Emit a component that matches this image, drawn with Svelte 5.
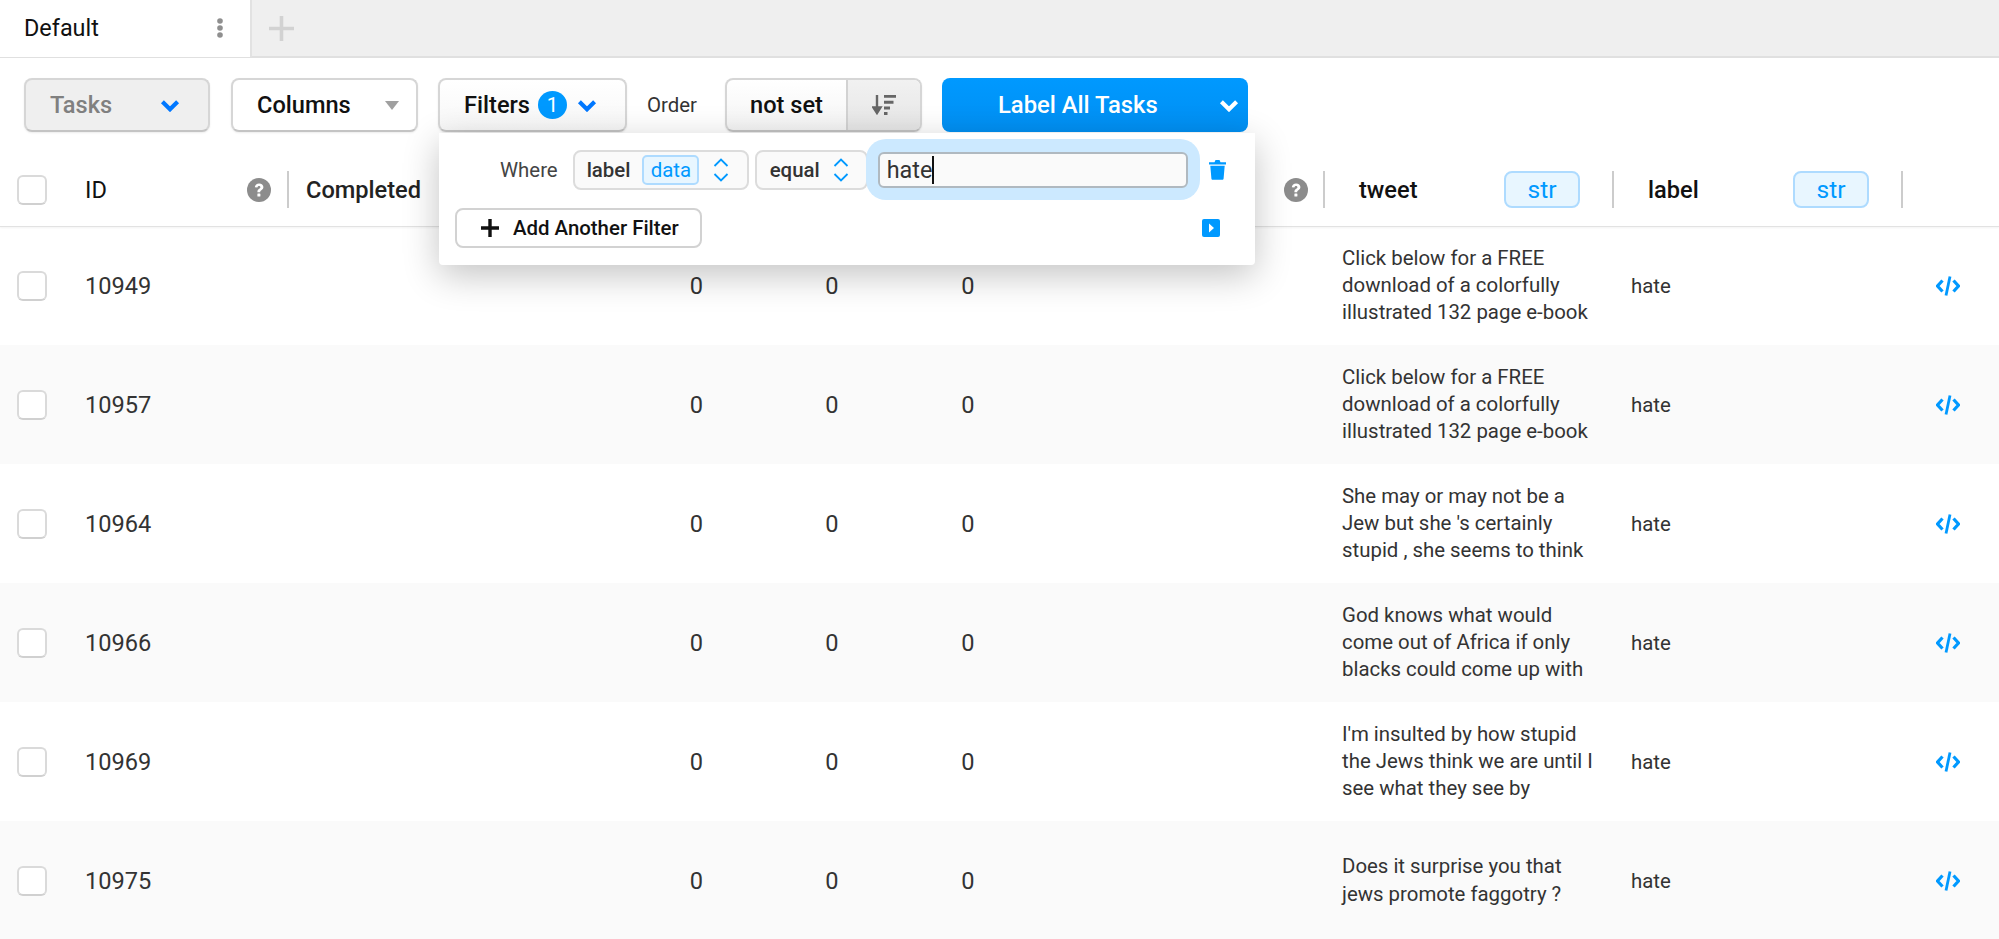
<script lang="ts">
	const rows = [
		{ id: 10949, tweet: ['Click below for a FREE', 'download of a colorfully', 'illustrated 132 page e-book'] },
		{ id: 10957, tweet: ['Click below for a FREE', 'download of a colorfully', 'illustrated 132 page e-book'] },
		{ id: 10964, tweet: ['She may or may not be a', "Jew but she 's certainly", 'stupid , she seems to think'] },
		{ id: 10966, tweet: ['God knows what would', 'come out of Africa if only', 'blacks could come up with'] },
		{ id: 10969, tweet: ["I'm insulted by how stupid", 'the Jews think we are until I', 'see what they see by'] },
		{ id: 10975, tweet: ['Does it surprise you that', 'jews promote faggotry ?'] }
	];
</script>

{#snippet chevron(cls: string)}
	<svg class={cls} viewBox="0 0 18 12" aria-hidden="true"><path d="M2 2.500 9 9.500l7-7" fill="none" stroke="currentColor" stroke-width="3.800" /></svg>
{/snippet}

{#snippet updown()}
	<svg class="updown" viewBox="0 0 18 26" aria-hidden="true"><path d="M2.500 9 9 2.500 15.500 9M2.500 17 9 23.500 15.500 17" fill="none" stroke="currentColor" stroke-width="1.800" /></svg>
{/snippet}

{#snippet help()}
	<svg class="help" viewBox="0 0 24 24" aria-hidden="true">
		<circle cx="12" cy="12" r="12" fill="#8c8c8c" />
		<path d="M7.800 9.300c.2-2.500 2-3.900 4.300-3.900 2.500 0 4.300 1.500 4.300 3.600 0 1.600-.8 2.400-2 3.200-.9.600-1.200 1-1.200 2H10.400c0-1.700.5-2.600 1.700-3.400.9-.6 1.300-1 1.300-1.600 0-.8-.6-1.300-1.400-1.300-.9 0-1.500.6-1.600 1.600z" fill="#fff" />
		<rect x="10.400" y="15.500" width="3" height="3" rx=".5" fill="#fff" />
	</svg>
{/snippet}

<div class="page">
	<div class="tabs">
		<div class="tab">
			<span>Default</span>
			<svg class="dots" viewBox="0 0 8 20" aria-hidden="true">
				<circle cx="4" cy="3" r="2.800" />
				<circle cx="4" cy="10" r="2.800" />
				<circle cx="4" cy="17" r="2.800" />
			</svg>
		</div>
		<svg class="add-tab" viewBox="0 0 25 25" aria-hidden="true"><path d="M12.500 0v25M0 12.500h25" stroke="currentColor" stroke-width="3.600" /></svg>
	</div>

	<div class="toolbar">
		<button class="btn tasks">
			<span>Tasks</span>
			{@render chevron('chev')}
		</button>
		<button class="btn columns">
			<span>Columns</span>
			<span class="caret"></span>
		</button>
		<button class="btn filters">
			<span>Filters</span>
			<span class="badge">1</span>
			{@render chevron('chev')}
		</button>
		<span class="order-label">Order</span>
		<div class="btn order">
			<span class="order-value">not set</span>
			<span class="order-dir">
				<svg viewBox="0 0 24 20" aria-hidden="true">
					<path d="M5 0v15M1.500 12.500 5 18l3.500-5.500z" fill="#666" stroke="#666" stroke-width="2.400" />
					<path d="M12 1.300h12M12 7.300h9.500M12 13h6M12 18.500h3.500" stroke="#666" stroke-width="3" />
				</svg>
			</span>
		</div>
		<div class="label-all">
			<span>Label All Tasks</span>
			{@render chevron('chev-white')}
		</div>
	</div>

	<div class="table">
		<div class="row head">
			<div class="cell"><span class="check"></span></div>
			<div class="cell id-head divided">
				<span>ID</span>
				{@render help()}
			</div>
			<div class="cell completed">Completed</div>
			<div class="cell"></div>
			<div class="cell"></div>
			<div class="cell"></div>
			<div class="cell help-cell divided">{@render help()}</div>
			<div class="cell col-head divided">
				<span>tweet</span>
				<span class="type">str</span>
			</div>
			<div class="cell col-head divided">
				<span>label</span>
				<span class="type">str</span>
			</div>
			<div class="cell"></div>
		</div>

		{#each rows as row}
			<div class="row body">
				<div class="cell"><span class="check"></span></div>
				<div class="cell id">{row.id}</div>
				<div class="cell"></div>
				<div class="cell num">0</div>
				<div class="cell num">0</div>
				<div class="cell num">0</div>
				<div class="cell"></div>
				<div class="cell tweet">
					{#each row.tweet as line}
						<div>{line}</div>
					{/each}
				</div>
				<div class="cell label">hate</div>
				<div class="cell code">
					<svg viewBox="0 0 24 20" aria-hidden="true">
						<path d="M6.500 4.500 1.500 10l5 5.500M17.500 4.500l5 5.500-5 5.500" fill="none" stroke="currentColor" stroke-width="3.200" />
						<path d="M14 .5 10 19.500" fill="none" stroke="currentColor" stroke-width="2.800" />
					</svg>
				</div>
			</div>
		{/each}
	</div>

	<div class="popup">
		<div class="filter-line">
			<span class="where">Where</span>
			<div class="select column-select">
				<span>label</span>
				<span class="type small">data</span>
				{@render updown()}
			</div>
			<div class="select op-select">
				<span>equal</span>
				{@render updown()}
			</div>
			<div class="focus-ring">
				<div class="input">hate<i class="caret-line"></i></div>
			</div>
			<svg class="trash" viewBox="0 0 19 21" aria-hidden="true">
				<path d="M1 3.200h17v2.400H1zM6.500 3.200 7.500 1h4l1 2.200z" fill="currentColor" />
				<path d="M2.300 6.800h14.400l-1.100 12.700c0 .8-.6 1.300-1.300 1.300H4.700c-.7 0-1.300-.5-1.300-1.300z" fill="currentColor" />
			</svg>
		</div>
		<div class="filter-actions">
			<div class="add-filter">
				<svg viewBox="0 0 18 18" aria-hidden="true"><path d="M9 0v18M0 9h18" stroke="currentColor" stroke-width="3.400" /></svg>
				<span>Add Another Filter</span>
			</div>
			<svg class="apply" viewBox="0 0 18 18" aria-hidden="true">
				<rect width="18" height="18" rx="2" fill="currentColor" />
				<path d="M7 4.500 12 9l-5 4.500z" fill="#fff" />
			</svg>
		</div>
	</div>
</div>

<style>
	:global(body) {
		background: #fff;
		font-family: Roboto, sans-serif;
		overflow: hidden;
	}

	.page {
		position: relative;
		height: 939px;
		overflow: hidden;
		color: #333;
	}

	.tabs {
		display: flex;
		align-items: center;
		height: 58px;
		box-sizing: border-box;
		background: #efefef;
		border-bottom: 2px solid #e0e0e0;
	}

	.tab {
		display: flex;
		align-items: center;
		justify-content: space-between;
		box-sizing: border-box;
		width: 252px;
		height: 58px;
		padding: 0 26px 0 24px;
		background: #fff;
		border-right: 2px solid #e2e2e2;
		font-size: 23.400px;
		color: #111;
	}

	.dots {
		width: 8px;
		height: 20px;
		fill: #8f8f8f;
	}

	.add-tab {
		width: 25px;
		height: 25px;
		margin-left: 17px;
		color: #d2d2d2;
	}

	.toolbar {
		display: flex;
		align-items: center;
		height: 54px;
		margin-top: 20px;
		padding-left: 24px;
	}

	.btn {
		display: flex;
		align-items: center;
		box-sizing: border-box;
		height: 54px;
		padding: 0;
		border: 2px solid #d6d6d6;
		border-bottom-color: #c4c4c4;
		border-radius: 8px;
		background: #fff;
		box-shadow: 0 1px 2px rgba(0, 0, 0, 0.08);
		font: 500 23.600px Roboto, sans-serif;
		color: #111;
	}

	.tasks {
		width: 186px;
		margin-right: 21px;
		padding: 0 28px 0 24px;
		justify-content: space-between;
		background: #efefef;
		color: #808080;
	}

	.columns {
		width: 187px;
		margin-right: 20px;
		padding: 0 17px 0 24px;
		justify-content: space-between;
	}

	.filters {
		width: 189px;
		padding-left: 24px;
		background: linear-gradient(#fff, #f7f7f7);
	}

	.chev {
		width: 20px;
		height: 13px;
		color: #0077ff;
	}

	.filters .chev {
		margin-left: 10px;
	}

	.caret {
		width: 0;
		height: 0;
		border-left: 7px solid transparent;
		border-right: 7px solid transparent;
		border-top: 9px solid #a0a0a0;
	}

	.badge {
		display: flex;
		align-items: center;
		justify-content: center;
		width: 29px;
		height: 28px;
		margin-left: 8px;
		border-radius: 50%;
		background: #0099ff;
		color: #fff;
		font-size: 20.400px;
		font-weight: 400;
	}

	.order-label {
		margin-left: 20px;
		margin-right: 28px;
		font-size: 20.400px;
		color: #333;
	}

	.order {
		width: 197px;
		margin-right: 20px;
		overflow: hidden;
		background: linear-gradient(#fff, #f4f4f4);
	}

	.order-value {
		flex: 1;
		text-align: center;
	}

	.order-dir {
		display: flex;
		align-items: center;
		justify-content: center;
		box-sizing: border-box;
		width: 74px;
		height: 100%;
		border-left: 2px solid #d2d2d2;
		background: linear-gradient(#f1f1f1, #e6e6e6);
	}

	.order-dir svg {
		width: 24px;
		height: 20px;
	}

	.label-all {
		position: relative;
		display: flex;
		align-items: center;
		box-sizing: border-box;
		width: 306px;
		height: 54px;
		padding: 0 9px 0 56px;
		justify-content: space-between;
		border-radius: 8px;
		background: linear-gradient(#0099ff, #008ff2);
		color: #fff;
		font-size: 23.800px;
		font-weight: 500;
	}

	.chev-white {
		width: 20px;
		height: 13px;
		color: #fff;
	}

	.table {
		margin-top: 1px;
	}

	.row {
		display: grid;
		grid-template-columns: 72px 217px 340px 135px 136px 136px 289px 289px 289px 96px;
		align-items: center;
	}

	.head {
		position: relative;
		box-sizing: border-box;
		height: 93px;
		padding-top: 20px;
		box-shadow: 0 1px 0 #e2e2e2, 0 2px 2px rgba(0, 0, 0, 0.05);
		font-size: 23.600px;
		font-weight: 500;
		color: #111;
	}

	.body {
		height: 119px;
		font-size: 23.600px;
	}

	.body:nth-child(odd) {
		background: #fafafa;
	}

	.cell {
		display: flex;
		align-items: center;
		min-width: 0;
	}

	.check {
		display: block;
		width: 30px;
		height: 30px;
		box-sizing: border-box;
		margin-left: 17px;
		border: 2px solid #dadada;
		border-bottom-color: #d0d0d0;
		border-radius: 6px;
		background: #fff;
	}

	.divided {
		height: 37px;
		border-right: 2px solid #ccc;
		box-sizing: border-box;
	}

	.id-head {
		justify-content: space-between;
		padding: 0 16px 0 13px;
		font-weight: 400;
	}

	.help {
		width: 24px;
		height: 24px;
	}

	.completed {
		padding-left: 17px;
		color: #222;
	}

	.help-cell {
		justify-content: flex-end;
		padding-right: 15px;
	}

	.col-head {
		justify-content: space-between;
		padding: 0 32px 0 34px;
	}

	.type {
		display: flex;
		align-items: center;
		justify-content: center;
		box-sizing: border-box;
		width: 76px;
		height: 37px;
		border: 2px solid #aedbff;
		border-radius: 8px;
		background: #e8f6ff;
		color: #0099ff;
		font-size: 24.500px;
		font-weight: 400;
	}

	.id {
		padding: 1px 0 0 13px;
	}

	.num {
		justify-content: center;
		padding-top: 1px;
	}

	.tweet {
		display: block;
		padding-left: 17px;
		font-size: 20.400px;
		line-height: 27.300px;
	}

	.label {
		padding-left: 17px;
		font-size: 20.400px;
	}

	.code {
		padding-left: 33px;
		color: #0099ff;
	}

	.code svg {
		width: 24px;
		height: 20px;
	}

	.popup {
		position: absolute;
		left: 439px;
		top: 133px;
		box-sizing: border-box;
		width: 816px;
		height: 132px;
		padding: 6px 17px 0;
		background: #fff;
		box-shadow: 0 10px 36px rgba(0, 0, 0, 0.24);
		border-radius: 0 0 4px 4px;
	}

	.filter-line {
		display: flex;
		align-items: center;
		height: 61px;
	}

	.where {
		margin-left: 44px;
		margin-right: 15px;
		font-size: 20.400px;
		color: #444;
	}

	.select {
		display: flex;
		align-items: center;
		box-sizing: border-box;
		height: 40px;
		border: 2px solid #dcdcdc;
		border-radius: 8px;
		background: #fafafa;
		font-size: 20.400px;
		font-weight: 500;
		color: #333;
	}

	.column-select {
		width: 176px;
		padding-left: 12px;
		margin-right: 6px;
	}

	.type.small {
		width: 57px;
		height: 30px;
		margin-left: 12px;
		margin-right: 13px;
		border-radius: 5px;
		font-size: 20.400px;
	}

	.op-select {
		width: 113px;
		padding-left: 13px;
	}

	.op-select .updown {
		margin-left: 12px;
	}

	.updown {
		width: 18px;
		height: 26px;
		color: #0099ff;
	}

	.focus-ring {
		display: flex;
		align-items: center;
		box-sizing: border-box;
		width: 334px;
		height: 61px;
		padding: 0 12px;
		margin-left: -2px;
		border-radius: 20px;
		background: #cce9ff;
	}

	.input {
		display: flex;
		align-items: center;
		box-sizing: border-box;
		width: 100%;
		height: 36px;
		padding-left: 7px;
		border: 2px solid #b0b9c0;
		border-radius: 6px;
		background: #fafafa;
		font-size: 23.400px;
		color: #333;
	}

	.caret-line {
		display: block;
		width: 2px;
		height: 28px;
		background: #111;
	}

	.trash {
		width: 19px;
		height: 21px;
		margin-left: 8px;
		color: #0099ff;
	}

	.filter-actions {
		display: flex;
		align-items: center;
		justify-content: space-between;
		margin-top: 8px;
		padding-right: 18px;
	}

	.add-filter {
		display: flex;
		align-items: center;
		box-sizing: border-box;
		width: 247px;
		height: 40px;
		margin-left: -1px;
		padding-left: 24px;
		border: 2px solid #d2d2d2;
		border-radius: 8px;
		font-size: 20.400px;
		font-weight: 500;
		color: #111;
	}

	.add-filter svg {
		width: 18px;
		height: 18px;
		margin-right: 14px;
	}

	.apply {
		width: 18px;
		height: 18px;
		color: #0099ff;
	}
</style>
